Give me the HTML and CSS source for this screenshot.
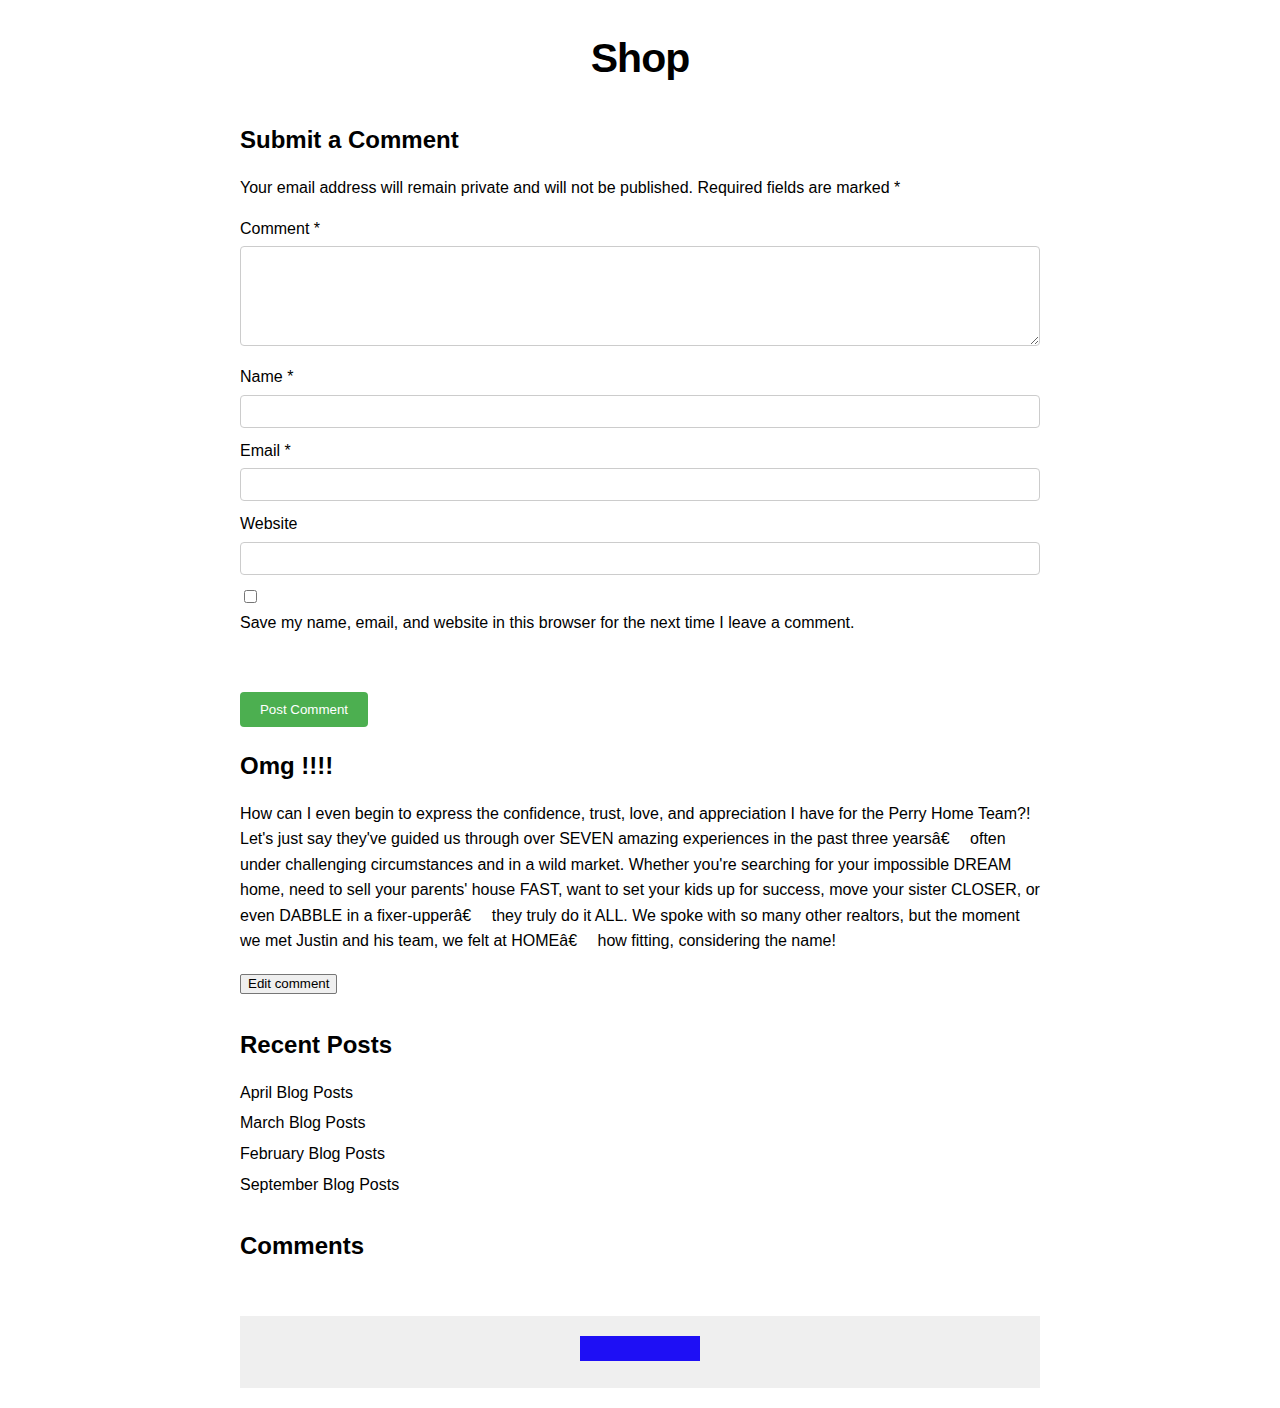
FILE: index.html
```html
<!DOCTYPE html>
<html lang="en">
<head>
<meta charset="utf-8">
<title>Shop</title>
<link rel="stylesheet" href="styles.css">
</head>
<body>
<div class="page">
  <h1 class="page-title">Shop</h1>

  <section class="respond">
    <h2 class="section-title">Submit a Comment</h2>
    <p class="notes">Your email address will remain private and will not be published. Required fields are marked *</p>
    <form class="comment-form">
      <label class="field-label first" for="comment">Comment *</label>
      <textarea id="comment" class="field-textarea"></textarea>

      <label class="field-label" for="name">Name *</label>
      <input id="name" class="field-input" type="text">

      <label class="field-label tight" for="email">Email *</label>
      <input id="email" class="field-input" type="text">

      <label class="field-label tight" for="url">Website</label>
      <input id="url" class="field-input" type="text">

      <div class="cookies">
        <input type="checkbox" class="cookies-box" id="cookies">
        <label class="cookies-label" for="cookies">Save my name, email, and website in this browser for the next time I leave a comment.</label>
      </div>

      <div class="submit-row">
        <button type="button" class="post-btn">Post Comment</button>
      </div>
    </form>
  </section>

  <section class="comment">
    <h3 class="comment-title">Omg !!!!</h3>
    <p class="comment-body">How can I even begin to express the confidence, trust, love, and appreciation I have for the Perry Home Team?! Let's just say they've guided us through over SEVEN amazing experiences in the past three yearsâ€&emsp; often under challenging circumstances and in a wild market. Whether you're searching for your impossible DREAM home, need to sell your parents' house FAST, want to set your kids up for success, move your sister CLOSER, or even DABBLE in a fixer-upperâ€&emsp; they truly do it ALL. We spoke with so many other realtors, but the moment we met Justin and his team, we felt at HOMEâ€&emsp; how fitting, considering the name!</p>
    <button type="button" class="edit-btn">Edit comment</button>
  </section>

  <section class="widget">
    <h2 class="section-title">Recent Posts</h2>
    <ul class="post-list">
      <li>April Blog Posts</li>
      <li>March Blog Posts</li>
      <li>February Blog Posts</li>
      <li>September Blog Posts</li>
    </ul>
  </section>

  <section class="widget">
    <h2 class="section-title">Comments</h2>
  </section>

  <footer class="footer">
    <div class="footer-block"></div>
  </footer>
</div>
</body>
</html>
```

FILE: styles.css
```css
html, body {
  margin: 0;
  padding: 0;
  background: #ffffff;
}

body {
  font-family: "Liberation Sans", Arial, sans-serif;
  font-size: 16px;
  color: #000;
  line-height: 1.6;
}

.page {
  width: 800px;
  margin: 0 auto;
  padding-top: 33px;
  padding-bottom: 20px;
}

.page-title {
  margin: 0;
  font-size: 41px;
  letter-spacing: -1px;
  line-height: 50px;
  text-align: center;
  font-weight: bold;
}

.section-title {
  margin: 0;
  font-size: 24px;
  line-height: 28px;
  font-weight: bold;
}

.respond .section-title {
  margin-top: 43px;
}

.notes {
  margin: 21px 0 0;
}

.comment-form {
  display: block;
}

.field-label {
  display: block;
  margin-top: 18px;
  margin-bottom: 5px;
}

.field-label.first {
  margin-top: 15px;
}

.field-label.tight {
  margin-top: 10px;
}

.field-textarea {
  display: block;
  box-sizing: border-box;
  width: 800px;
  height: 100px;
  margin: 0;
  border: 1px solid #cccccc;
  border-radius: 4px;
  padding: 8px;
  font-family: "Liberation Sans", Arial, sans-serif;
  font-size: 16px;
  resize: vertical;
}

.field-input {
  display: block;
  box-sizing: border-box;
  width: 800px;
  height: 33px;
  margin: 0;
  border: 1px solid #cccccc;
  border-radius: 4px;
  padding: 6px 8px;
  font-family: "Liberation Sans", Arial, sans-serif;
  font-size: 16px;
}

.cookies {
  margin-top: 15px;
}

.cookies-box {
  display: block;
  margin: 3px 3px 3px 4px;
  width: 13px;
  height: 13px;
}

.cookies-label {
  display: block;
  margin-top: 7px;
}

.submit-row {
  margin-top: 56px;
}

.post-btn {
  display: block;
  width: 128px;
  height: 35px;
  border: none;
  border-radius: 4px;
  background: #4caf50;
  color: #ffffff;
  font-family: "Liberation Sans", Arial, sans-serif;
  font-size: 13.33px;
  padding: 0;
  cursor: pointer;
}

.comment {
  margin-top: 24px;
}

.comment-title {
  margin: 0;
  font-size: 24px;
  line-height: 30px;
  font-weight: bold;
}

.comment-body {
  margin: 20px 0 0;
  line-height: 25.5px;
}

.edit-btn {
  display: block;
  margin-top: 20px;
  font-family: "Liberation Sans", Arial, sans-serif;
  font-size: 13.33px;
  line-height: 16px;
  padding: 1px 7px;
  background: #efefef;
  border: 1px solid #767676;
  border-radius: 2px;
  color: #000;
}

.widget {
  margin-top: 37px;
}

.widget + .widget {
  margin-top: 32px;
}

.post-list {
  list-style: none;
  margin: 19px 0 0;
  padding: 0;
}

.post-list li {
  line-height: 30.7px;
}

.footer {
  margin-top: 56px;
  height: 72px;
  background: #efefef;
  display: flex;
  justify-content: center;
  align-items: flex-start;
  padding-top: 20px;
  box-sizing: border-box;
}

.footer-block {
  width: 120px;
  height: 25px;
  background: #1e0ff5;
}
```
